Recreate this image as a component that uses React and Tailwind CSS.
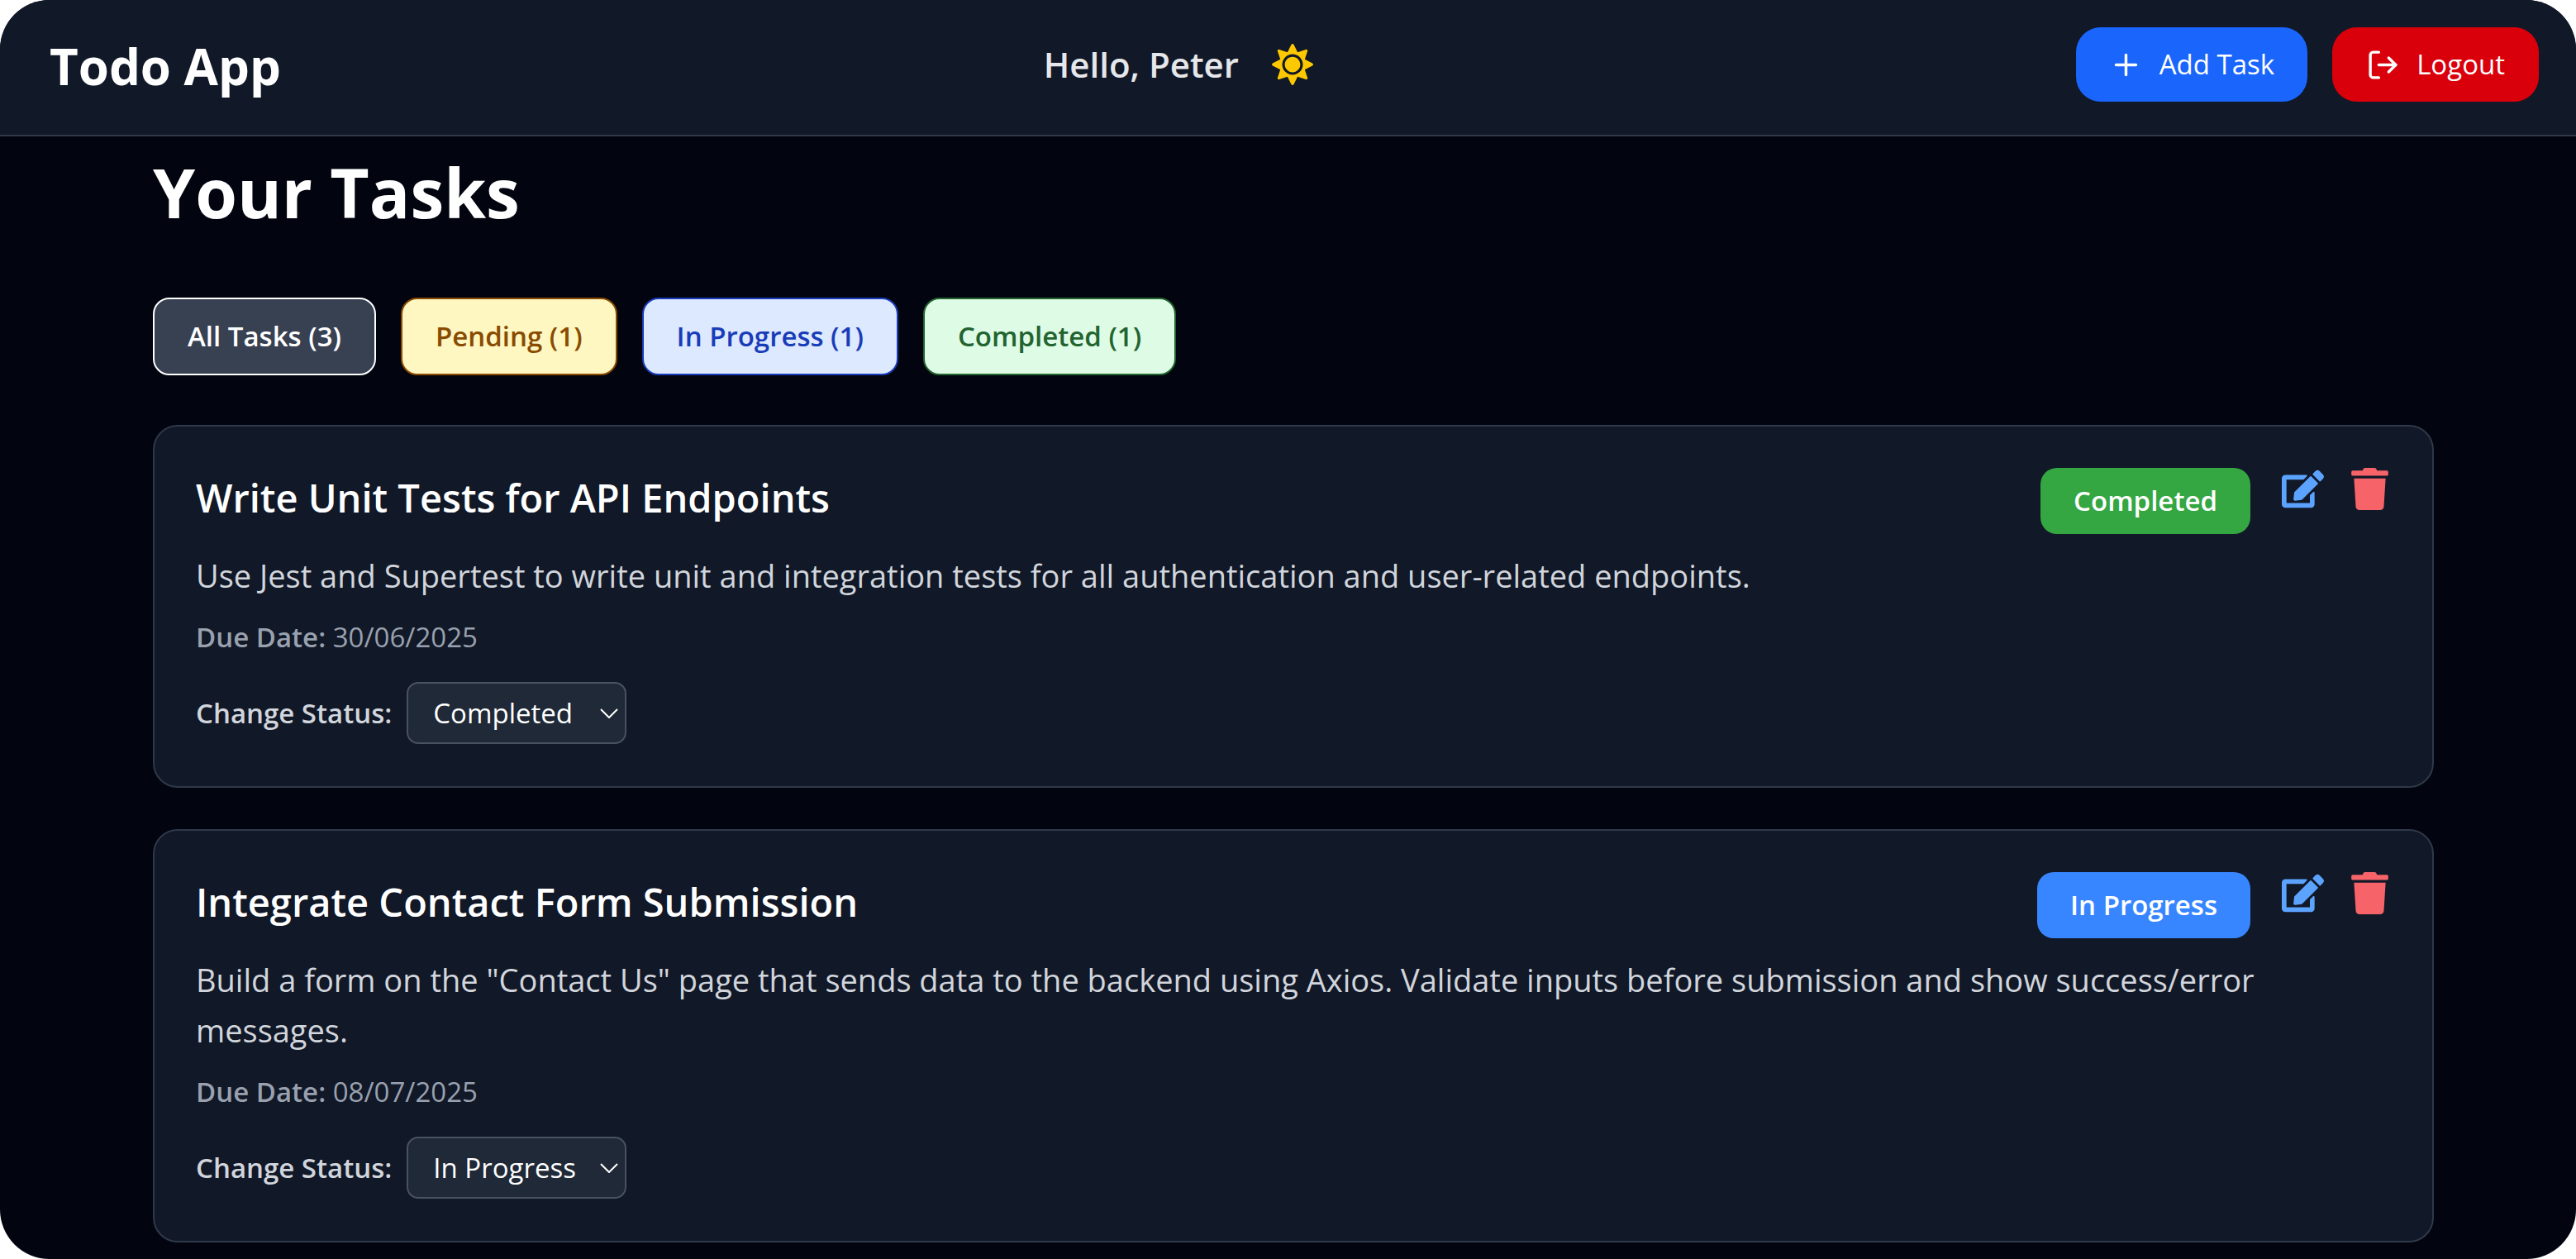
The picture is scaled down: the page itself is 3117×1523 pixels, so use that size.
import { useState } from "react";
import { FaEdit, FaSun, FaTrash } from "react-icons/fa";
import { FiLogOut, FiPlus } from "react-icons/fi";

const initialTasks = [
  {
    id: 1,
    title: "Write Unit Tests for API Endpoints",
    description:
      "Use Jest and Supertest to write unit and integration tests for all authentication and user-related endpoints.",
    due: "30/06/2025",
    status: "Completed",
  },
  {
    id: 2,
    title: "Integrate Contact Form Submission",
    description:
      'Build a form on the "Contact Us" page that sends data to the backend using Axios. Validate inputs before submission and show success/error messages.',
    due: "08/07/2025",
    status: "In Progress",
  },
];

const filters = [
  { label: "All Tasks (3)", style: "border-white bg-[#384152] text-white" },
  { label: "Pending (1)", style: "border-[#894b00] bg-[#fef7c2] text-[#894b00]" },
  { label: "In Progress (1)", style: "border-[#193cb8] bg-[#dce9fe] text-[#193cb8]" },
  { label: "Completed (1)", style: "border-[#226330] bg-[#defbe5] text-[#226330]" },
];

const badgeStyles = {
  Pending: "bg-[#f0b100]",
  "In Progress": "bg-[#3886ff]",
  Completed: "bg-[#34a642]",
};

function Header() {
  return (
    <header className="flex items-center justify-between border-b-2 border-[#2f394a] bg-[#111827] pt-[33px] pr-[45px] pb-10 pl-[60px]">
      <div className="pt-1 text-[60px] leading-[82px] font-bold text-white">Todo App</div>
      <div className="flex items-center gap-10">
        <span className="text-[42px] leading-[60px] font-semibold text-[#e5e7eb]">Hello, Peter</span>
        <button type="button" aria-label="Switch theme" className="text-[50px] text-[#fcc800]">
          <FaSun />
        </button>
      </div>
      <div className="flex gap-[30px] text-[33px] leading-[50px] text-white">
        <button type="button" className="flex items-center gap-5 rounded-[30px] bg-[#1a65fc] px-10 py-5">
          <FiPlus className="size-[41px]" />
          Add Task
        </button>
        <button type="button" className="flex items-center gap-5 rounded-[30px] bg-[#d9000b] px-[41px] py-5">
          <FiLogOut className="size-[41px]" />
          Logout
        </button>
      </div>
    </header>
  );
}

function TaskCard({ task, onStatus }) {
  const selectId = `status-${task.id}`;
  return (
    <article className="flex items-start gap-[38px] rounded-[30px] border-2 border-[#2f394a] bg-[#111827] px-[50px] pt-[50px] pb-[51px]">
      <div className="flex-1">
        <div className="flex items-start justify-between">
          <h2 className="text-[47px] leading-[72px] font-semibold text-white">{task.title}</h2>
          <span
            className={`rounded-[20px] px-10 py-[15px] text-[33px] leading-[50px] font-semibold text-white ${badgeStyles[task.status]}`}
          >
            {task.status}
          </span>
        </div>
        <p className="mt-5 -mr-4 text-[38px] leading-[61px] text-[#d1d5dc]">{task.description}</p>
        <p className="mt-[18px] text-[33px] leading-[52px] text-[#99a1af]">
          <span className="font-semibold">Due Date:</span> {task.due}
        </p>
        <div className="mt-7 flex items-center gap-[18px] text-[33px] leading-[51px]">
          <label htmlFor={selectId} className="font-semibold text-[#d1d5dc]">
            Change Status:
          </label>
          <div className="relative">
            <select
              id={selectId}
              value={task.status}
              onChange={(e) => onStatus(task.id, e.target.value)}
              className="w-[266px] appearance-none rounded-[14px] border-2 border-[#485262] bg-[#202937] py-[10px] pl-[30px] text-white"
            >
              <option>Pending</option>
              <option>In Progress</option>
              <option>Completed</option>
            </select>
            <svg
              viewBox="0 0 22 12"
              className="pointer-events-none absolute top-8 right-[10px] h-3 w-[22px] fill-none stroke-white stroke-2"
            >
              <path d="M1 1l10 10L21 1" />
            </svg>
          </div>
        </div>
      </div>
      <div className="flex gap-[30px]">
        <button type="button" aria-label="Edit task" className="text-[51px] text-[#5ba3ff]">
          <FaEdit />
        </button>
        <button type="button" aria-label="Delete task" className="text-[51px] text-[#f66369]">
          <FaTrash />
        </button>
      </div>
    </article>
  );
}

export default function App() {
  const [tasks, setTasks] = useState(initialTasks);
  const setStatus = (id, status) =>
    setTasks(tasks.map((t) => (t.id === id ? { ...t, status } : t)));

  return (
    <div className="bg-white font-['Open_Sans',sans-serif]">
      <div className="min-h-screen overflow-hidden rounded-[60px] bg-[#02050f]">
        <Header />
        <main className="pr-[172px] pb-5 pl-[185px]">
          <h1 className="pt-4 text-[82px] leading-[102px] font-bold text-white">Your Tasks</h1>
          <div className="mt-[77px] flex gap-[30px]">
            {filters.map((f) => (
              <button
                key={f.label}
                type="button"
                className={`rounded-[20px] border-2 px-10 py-5 text-[33px] leading-[50px] font-semibold ${f.style}`}
              >
                {f.label}
              </button>
            ))}
          </div>
          <div className="mt-[60px] flex flex-col gap-[50px]">
            {tasks.map((t) => (
              <TaskCard key={t.id} task={t} onStatus={setStatus} />
            ))}
          </div>
        </main>
      </div>
    </div>
  );
}
